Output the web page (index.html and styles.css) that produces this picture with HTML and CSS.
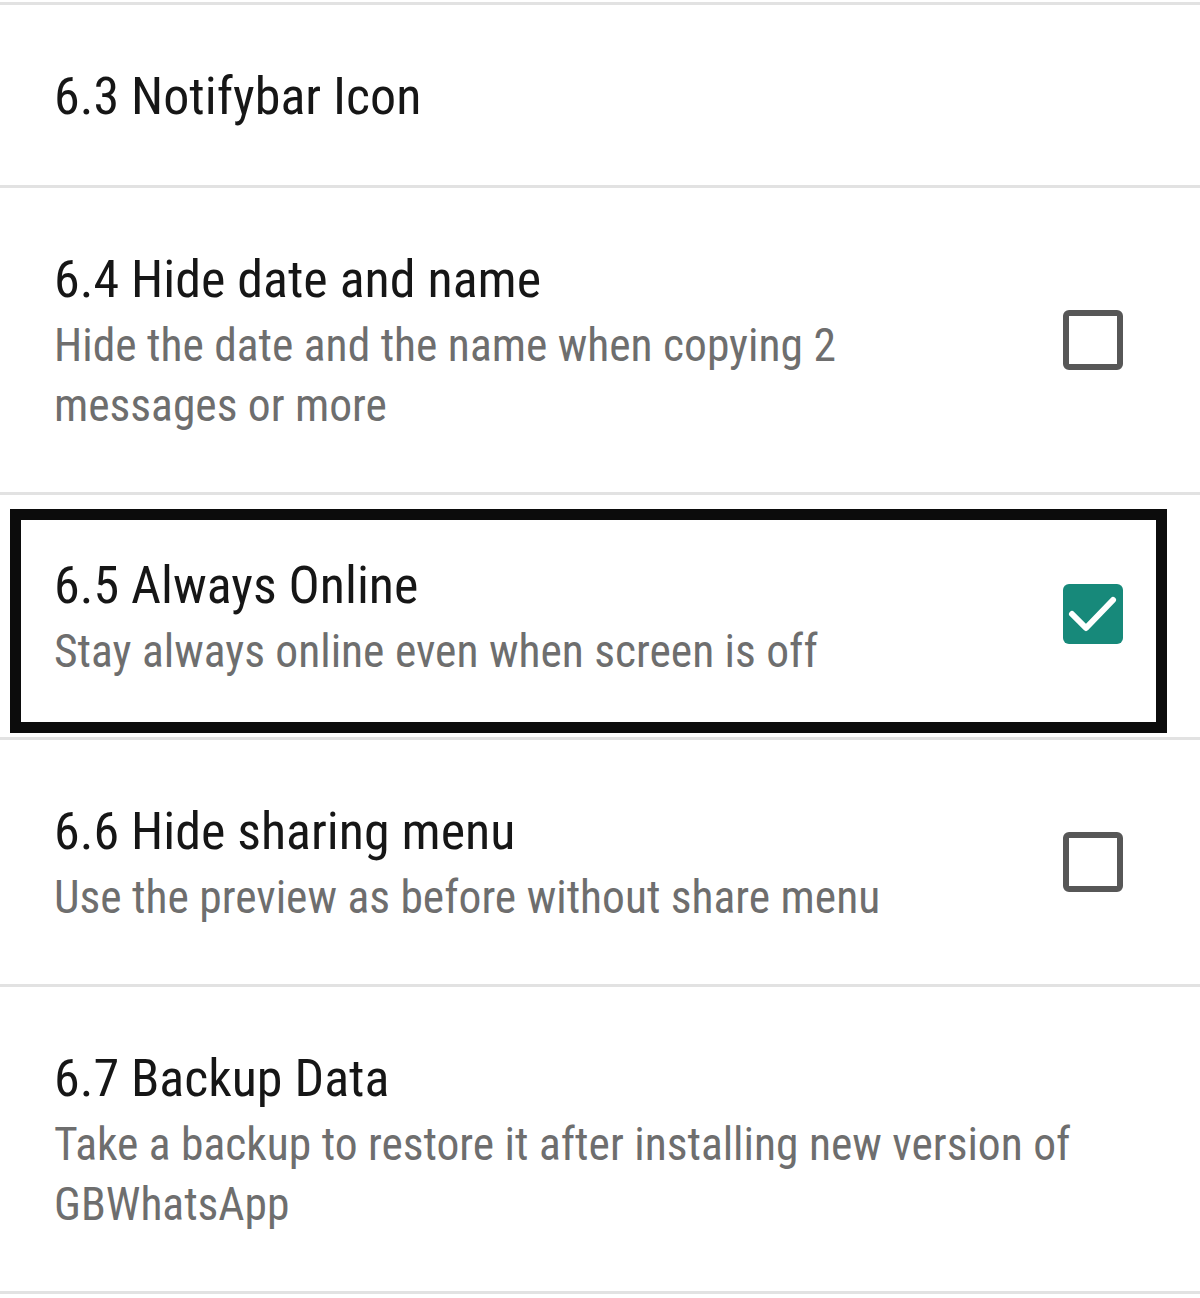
FILE: index.html
```html
<!DOCTYPE html>
<html>
<head>
<meta charset="utf-8">
<link rel="stylesheet" href="styles.css">
</head>
<body>
<div class="list">
  <div class="row">
    <div class="text">
      <div class="title">6.3 Notifybar Icon</div>
    </div>
  </div>
  <div class="row">
    <div class="text">
      <div class="title">6.4 Hide date and name</div>
      <div class="sub">Hide the date and the name when copying 2 messages or more</div>
    </div>
    <div class="check"></div>
  </div>
  <div class="row-boxed">
    <div class="box">
      <div class="text">
        <div class="title">6.5 Always Online</div>
        <div class="sub">Stay always online even when screen is off</div>
      </div>
      <div class="check on">
        <svg viewBox="0 0 60 60" width="60" height="60"><path d="M9 30 L23 44 L50 16" fill="none" stroke="#fff" stroke-width="6" stroke-linecap="round" stroke-linejoin="round"/></svg>
      </div>
    </div>
  </div>
  <div class="row">
    <div class="text">
      <div class="title">6.6 Hide sharing menu</div>
      <div class="sub">Use the preview as before without share menu</div>
    </div>
    <div class="check"></div>
  </div>
  <div class="row">
    <div class="text">
      <div class="title">6.7 Backup Data</div>
      <div class="sub">Take a backup to restore it after installing new version of GBWhatsApp</div>
    </div>
  </div>
</div>
</body>
</html>
```
FILE: styles.css
```css
html, body {
  margin: 0;
  padding: 0;
  background: #ffffff;
}
.list {
  width: 1200px;
  border-top: 3px solid #e2e2e2;
  margin-top: 2px;
  font-family: "Roboto", "Roboto Condensed", sans-serif;
  font-stretch: 75%;
}
.row {
  display: flex;
  align-items: center;
  padding: 60px 77px 56px 54px;
  border-bottom: 3px solid #e2e2e2;
}
.row-boxed {
  padding: 14px 33px 4px 10px;
  border-bottom: 3px solid #e2e2e2;
}
.box {
  display: flex;
  align-items: center;
  border: 11px solid #0c0c0c;
  padding: 34px 33px 40px 33px;
}
.text {
  flex: 1;
  min-width: 0;
}
.title {
  font-size: 52px;
  line-height: 64px;
  color: #161616;
}
.sub {
  margin-top: 4px;
  font-size: 45.5px;
  line-height: 60px;
  color: #6e6e6e;
}
.check {
  flex: none;
  margin-left: 100px;
  margin-bottom: 5px;
  width: 48px;
  height: 48px;
  border: 6px solid #575757;
  border-radius: 6px;
}
.check.on {
  width: 60px;
  height: 60px;
  border: none;
  background: #17897a;
  margin-bottom: 9px;
}
.check svg {
  display: block;
}
```
